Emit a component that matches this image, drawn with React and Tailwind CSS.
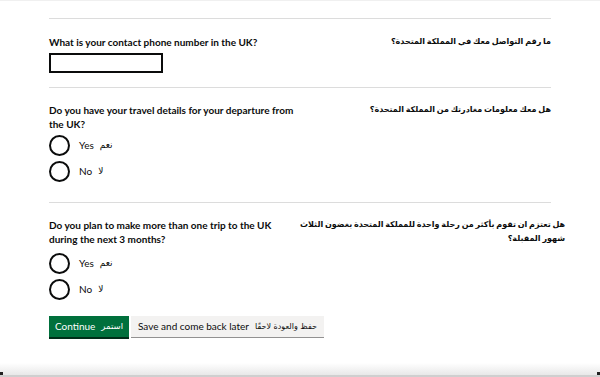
const font = { fontFamily: '"Lato", "DejaVu Sans", sans-serif' }

function Radio({ en, ar }) {
  return (
    <div className="flex items-center h-[21px]">
      <span className="w-[21px] h-[21px] rounded-full border-2 border-[#0b0c0c] bg-white" />
      <span className="ml-[9px] text-[10px] text-[#0b0c0c]">{en}</span>
      <span className="ml-[6px] text-[9px] text-[#0b0c0c] font-['DejaVu_Sans',sans-serif]">{ar}</span>
    </div>
  )
}

function Question({ en, ar, gap = "mt-[4px]", children }) {
  return (
    <div className="grid grid-cols-[251px_1fr]">
      <div>
        <p className="text-[10px] leading-[14px] font-bold text-[#0b0c0c]">{en}</p>
        <div className={gap}>{children}</div>
      </div>
      <p dir="rtl" className="text-[8px] leading-[14px] font-bold text-[#0b0c0c] font-['DejaVu_Sans',sans-serif] whitespace-nowrap [word-spacing:-1px]">
        {ar}
      </p>
    </div>
  )
}

export default function App() {
  return (
    <div style={font} className="w-[600px] h-[377px] bg-white flex flex-col border-t border-[#f0f0f0]">
      <div className="flex-1 px-[49px]">
        <div className="mt-[17px] border-t border-[#dcdcdc]" />

        <div className="pt-[16px] pb-[14px]">
          <Question en="What is your contact phone number in the UK?" ar="ما رقم التواصل معك في المملكة المتحدة؟">
            <div className="w-[114px] h-[20px] border-2 border-[#0b0c0c]" />
          </Question>
        </div>

        <div className="border-t border-[#dcdcdc]" />

        <div className="pt-[15px] pb-[20px]">
          <Question
            en="Do you have your travel details for your departure from the UK?"
            ar="هل معك معلومات مغادرتك من المملكة المتحدة؟"
          >
            <div className="flex flex-col gap-[5px]">
              <Radio en="Yes" ar="نعم" />
              <Radio en="No" ar="لا" />
            </div>
          </Question>
        </div>

        <div className="border-t border-[#dcdcdc]" />

        <div className="pt-[15px]">
          <Question
            en="Do you plan to make more than one trip to the UK during the next 3 months?"
            ar={
              <>
                هل تعتزم ان تقوم بأكثر من رحلة واحدة للمملكة المتحدة بغضون الثلاث
                <br />
                شهور المقبلة؟
              </>
            }
            gap="mt-[7px]"
          >
            <div className="flex flex-col gap-[5px]">
              <Radio en="Yes" ar="نعم" />
              <Radio en="No" ar="لا" />
            </div>
          </Question>
        </div>

        <div className="mt-[16px] flex gap-[2px] items-start">
          <button className="h-[21px] px-[6px] flex items-center gap-[6px] bg-[#00703c] text-white text-[10px] shadow-[0_2px_0_#002d18]">
            <span>Continue</span>
            <span className="text-[8.5px] font-['DejaVu_Sans',sans-serif]">استمر</span>
          </button>
          <button className="h-[21px] px-[7px] flex items-center gap-[6px] bg-[#f3f2f1] text-[#0b0c0c] text-[10px] shadow-[0_1px_0_#929191]">
            <span>Save and come back later</span>
            <span className="text-[8px] font-['DejaVu_Sans',sans-serif]">حفظ والعودة لاحقًا</span>
          </button>
        </div>
      </div>

      <div className="h-[14px] bg-gradient-to-b from-white to-[#e8e8e8] border-b-2 border-[#cfcfcf] flex justify-between items-end">
        <span className="w-[3px] h-[3px] bg-[#222]" />
        <span className="w-[3px] h-[3px] bg-[#222]" />
      </div>
    </div>
  )
}
